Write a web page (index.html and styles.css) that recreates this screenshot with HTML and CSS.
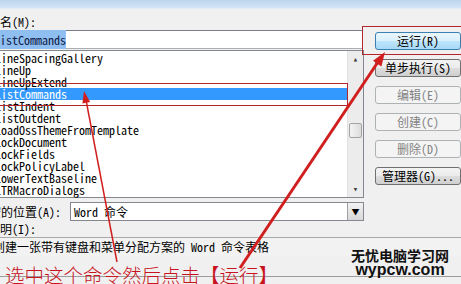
FILE: index.html
```html
<!DOCTYPE html>
<html lang="zh-CN">
<head>
    <meta charset="UTF-8">
    <title>宏</title>
    <link rel="stylesheet" href="styles.css">
</head>
<body>
    <div class="titlebar"></div>
    <div class="dialog">
        <div class="main">
            <div class="label">宏名(M):</div>
            <div class="namebox"><span class="sel">ListCommands</span></div>
            <div class="list">
                <ul class="items">
                    <li>LineSpacingGallery</li>
                    <li>LineUp</li>
                    <li>LineUpExtend</li>
                    <li class="active">ListCommands</li>
                    <li>ListIndent</li>
                    <li>ListOutdent</li>
                    <li>LoadOssThemeFromTemplate</li>
                    <li>LockDocument</li>
                    <li>LockFields</li>
                    <li>LockPolicyLabel</li>
                    <li>LowerTextBaseline</li>
                    <li>LTRMacroDialogs</li>
                </ul>
                <div class="scrollbar">
                    <span class="arrow">&#9652;</span>
                    <span></span>
                    <span class="thumb"></span>
                    <span></span>
                    <span class="arrow">&#9662;</span>
                </div>
            </div>
            <div class="field-row">
                <span class="row-label">宏的位置(A):</span>
                <div class="select">
                    <span class="select-text">Word 命令</span>
                    <span class="drop">&#9660;</span>
                </div>
            </div>
            <div class="label small">说明(I):</div>
            <div class="desc">创建一张带有键盘和菜单分配方案的 Word 命令表格</div>
            <div class="footer"></div>
        </div>
        <div class="buttons">
            <button class="btn default">运行(R)</button>
            <button class="btn">单步执行(S)</button>
            <button class="btn" disabled>编辑(E)</button>
            <button class="btn" disabled>创建(C)</button>
            <button class="btn" disabled>删除(D)</button>
            <button class="btn">管理器(G)...</button>
        </div>
    </div>

    <!-- 标注 -->
    <div class="mark mark-list"></div>
    <div class="mark mark-run"></div>
    <svg class="arrows" width="461" height="284" viewBox="0 0 461 284">
        <line x1="117" y1="262" x2="86" y2="100" stroke="#d11f1f" stroke-width="1.5"/>
        <polygon points="84,91 90.2,102 82.4,103.6" fill="#d11f1f"/>
        <line x1="240" y1="268" x2="378" y2="62" stroke="#d11f1f" stroke-width="3"/>
        <polygon points="385,52 381.4,66.4 373,60.8" fill="#d11f1f"/>
    </svg>
    <p class="note">选中这个命令然后点击【运行】</p>
    <div class="watermark">
        <span class="wm-cn">无忧电脑学习网</span>
        <span class="wm-en">wypcw.com</span>
    </div>
</body>
</html>
```

FILE: styles.css
```css
body {
    margin: 0;
    width: 461px;
    height: 284px;
    overflow: hidden;
    position: relative;
    background-color: #f0f0f0;
    color: #000;
    font-family: "Noto Sans Mono CJK SC", "Noto Sans CJK SC", monospace;
    font-size: 12px;
}
.titlebar {
    height: 8px;
    background: linear-gradient(#bcd6ee, #d3e5f5);
    border-bottom: 1px solid #e4ecf4;
}
.dialog {
    display: flex;
    margin-left: -10px;
}
.main {
    width: 374px;
    flex: none;
}
.label {
    height: 17px;
    padding-top: 4px;
    line-height: 17px;
    white-space: nowrap;
    text-indent: -2px;
}
.label.small {
    height: 16px;
    padding-top: 0;
    line-height: 16px;
}
.namebox {
    height: 19px;
    box-sizing: border-box;
    margin-right: 1px;
    border: 1px solid #abadb3;
    border-top-color: #7a7f86;
    background-color: #fff;
    padding-left: 3px;
    line-height: 17px;
}
.sel {
    background-color: #8fbff0;
    color: #10204a;
    padding: 1px 0;
}
.list {
    display: flex;
    margin-top: 1px;
    height: 148px;
    box-sizing: border-box;
    border: 1px solid #828790;
    background-color: #fff;
}
.items {
    flex: 1;
    list-style: none;
    margin: 0;
    padding: 1px 0 0 0;
}
.items li {
    height: 12px;
    line-height: 12px;
    padding-left: 4px;
    white-space: nowrap;
}
.items li.active {
    background-color: #3399ff;
    color: #fff;
}
.scrollbar {
    width: 15px;
    display: grid;
    grid-template-rows: 16px 56px 15px 1fr 16px;
    background-color: #ececec;
    border-left: 1px solid #e2e2e2;
}
.arrow {
    font-size: 9px;
    line-height: 16px;
    text-align: center;
    color: #3c3c3c;
}
.thumb {
    margin: 0 1px;
    border: 1px solid #a3a3a3;
    border-radius: 2px;
    background: linear-gradient(90deg, #f4f4f4, #dcdcdc);
}
.field-row {
    display: flex;
    align-items: center;
    margin-top: 4px;
    height: 19px;
}
.row-label {
    width: 80px;
    flex: none;
    white-space: nowrap;
    text-indent: -1px;
}
.select {
    flex: 1;
    display: flex;
    height: 19px;
    box-sizing: border-box;
    border: 1px solid #828790;
    background-color: #fff;
}
.select-text {
    flex: 1;
    padding-left: 3px;
    line-height: 17px;
}
.drop {
    width: 15px;
    border-left: 1px solid #a0a0a0;
    background: linear-gradient(#f2f2f2, #d8d8d8);
    font-size: 8px;
    line-height: 17px;
    text-align: center;
}
.desc {
    height: 18px;
    border-top: 1px solid #a9a9a9;
    background-color: #f2f2f2;
    padding-left: 3px;
    line-height: 17px;
    white-space: nowrap;
    margin-right: -100px;
}
.footer {
    height: 20px;
    border-bottom: 1px solid #9c9c9c;
    margin-right: -100px;
}
.buttons {
    display: flex;
    flex-direction: column;
    gap: 9px;
    padding-top: 23px;
    margin-left: 11px;
}
.btn {
    width: 86px;
    height: 18px;
    padding: 0;
    border: 1px solid #707070;
    border-radius: 3px;
    background: linear-gradient(#f3f3f3 0%, #ebebeb 50%, #dddddd 51%, #cfcfcf 100%);
    font-family: "Noto Sans Mono CJK SC", "Noto Sans CJK SC", monospace;
    font-size: 12px;
    line-height: 16px;
    color: #000;
}
.btn.default {
    border-color: #3c7fb1;
    background: linear-gradient(#eaf6fd 0%, #d9f0fc 50%, #bee6fd 51%, #a7d9f5 100%);
}
.btn:disabled {
    border-color: #adb2b5;
    background: #f4f4f4;
    color: #838383;
}
.mark {
    position: absolute;
    border: 1px solid #b3262b;
}
.mark-list {
    left: -2px;
    top: 83px;
    width: 348px;
    height: 21px;
}
.mark-run {
    left: 362px;
    top: 26px;
    width: 104px;
    height: 27px;
}
.arrows {
    position: absolute;
    left: 0;
    top: 0;
}
.note {
    position: absolute;
    left: 5px;
    top: 262px;
    margin: 0;
    font-family: "Noto Sans CJK SC", sans-serif;
    font-size: 19.5px;
    font-weight: 300;
    line-height: 26px;
    color: #c8141e;
    white-space: nowrap;
}
.watermark {
    position: absolute;
    left: 350px;
    top: 248px;
    display: flex;
    flex-direction: column;
    align-items: center;
    width: 100px;
    font-weight: bold;
    color: #111;
}
.wm-cn {
    font-family: "Noto Sans CJK SC", sans-serif;
    font-size: 14px;
    line-height: 15px;
}
.wm-en {
    font-family: "Liberation Sans", sans-serif;
    font-size: 16px;
    line-height: 13px;
}
```
